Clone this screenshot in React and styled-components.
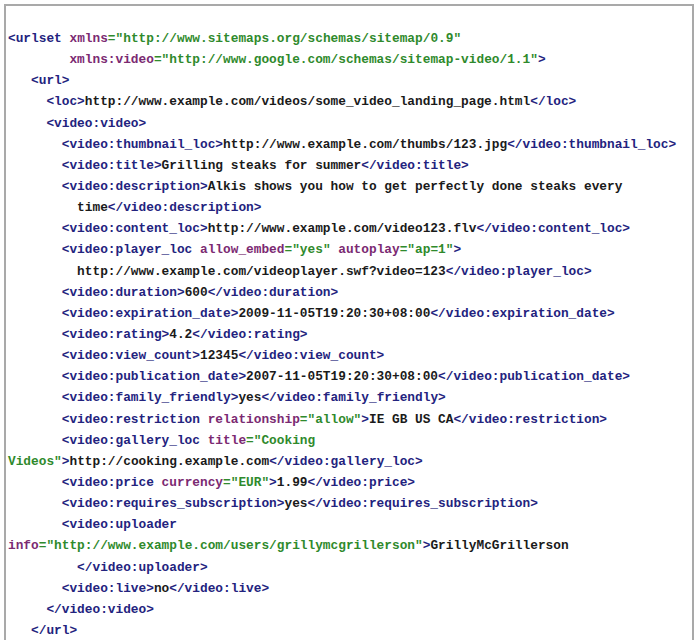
import React from 'react';
import styled, { createGlobalStyle } from 'styled-components';

const GlobalStyle = createGlobalStyle`
  html, body {
    margin: 0;
    padding: 0;
    background: #ffffff;
    overflow: hidden;
  }
`;

// each line: [indent, tokens], token: [kind, text]
const lines = [
  [0, [['t', '<urlset'], ['x', ' '], ['a', 'xmlns'], ['v', '="http://www.sitemaps.org/schemas/sitemap/0.9"']]],
  [8, [['a', 'xmlns:video'], ['v', '="http://www.google.com/schemas/sitemap-video/1.1"'], ['t', '>']]],
  [3, [['t', '<url>']]],
  [5, [['t', '<loc>'], ['x', 'http://www.example.com/videos/some_video_landing_page.html'], ['t', '</loc>']]],
  [5, [['t', '<video:video>']]],
  [7, [['t', '<video:thumbnail_loc>'], ['x', 'http://www.example.com/thumbs/123.jpg'], ['t', '</video:thumbnail_loc>']]],
  [7, [['t', '<video:title>'], ['x', 'Grilling steaks for summer'], ['t', '</video:title>']]],
  [7, [['t', '<video:description>'], ['x', 'Alkis shows you how to get perfectly done steaks every']]],
  [9, [['x', 'time'], ['t', '</video:description>']]],
  [7, [['t', '<video:content_loc>'], ['x', 'http://www.example.com/video123.flv'], ['t', '</video:content_loc>']]],
  [7, [['t', '<video:player_loc'], ['x', ' '], ['a', 'allow_embed'], ['v', '="yes"'], ['x', ' '], ['a', 'autoplay'], ['v', '="ap=1"'], ['t', '>']]],
  [9, [['x', 'http://www.example.com/videoplayer.swf?video=123'], ['t', '</video:player_loc>']]],
  [7, [['t', '<video:duration>'], ['x', '600'], ['t', '</video:duration>']]],
  [7, [['t', '<video:expiration_date>'], ['x', '2009-11-05T19:20:30+08:00'], ['t', '</video:expiration_date>']]],
  [7, [['t', '<video:rating>'], ['x', '4.2'], ['t', '</video:rating>']]],
  [7, [['t', '<video:view_count>'], ['x', '12345'], ['t', '</video:view_count>']]],
  [7, [['t', '<video:publication_date>'], ['x', '2007-11-05T19:20:30+08:00'], ['t', '</video:publication_date>']]],
  [7, [['t', '<video:family_friendly>'], ['x', 'yes'], ['t', '</video:family_friendly>']]],
  [7, [['t', '<video:restriction'], ['x', ' '], ['a', 'relationship'], ['v', '="allow"'], ['t', '>'], ['x', 'IE GB US CA'], ['t', '</video:restriction>']]],
  [7, [['t', '<video:gallery_loc'], ['x', ' '], ['a', 'title'], ['v', '="Cooking']]],
  [0, [['v', 'Videos"'], ['t', '>'], ['x', 'http://cooking.example.com'], ['t', '</video:gallery_loc>']]],
  [7, [['t', '<video:price'], ['x', ' '], ['a', 'currency'], ['v', '="EUR"'], ['t', '>'], ['x', '1.99'], ['t', '</video:price>']]],
  [7, [['t', '<video:requires_subscription>'], ['x', 'yes'], ['t', '</video:requires_subscription>']]],
  [7, [['t', '<video:uploader']]],
  [0, [['a', 'info'], ['v', '="http://www.example.com/users/grillymcgrillerson"'], ['t', '>'], ['x', 'GrillyMcGrillerson']]],
  [9, [['t', '</video:uploader>']]],
  [7, [['t', '<video:live>'], ['x', 'no'], ['t', '</video:live>']]],
  [5, [['t', '</video:video>']]],
  [3, [['t', '</url>']]],
];

const colors = {
  t: '#23237e',
  a: '#7b2a72',
  v: '#2f8a2c',
  x: '#1a1a1a',
};

const Frame = styled.div`
  margin: 4px 0 0 4px;
  width: 690px;
  height: 660px;
  border: 2px solid #a9a9a9;
  border-bottom: none;
  box-sizing: border-box;
  padding: 22px 0 0 2px;
`;

const Code = styled.pre`
  margin: 0;
  font-family: "Liberation Mono", "Courier New", monospace;
  font-size: 12.8px;
  font-weight: bold;
  line-height: 21.14px;
  white-space: pre;
  color: #1a1a1a;
`;

const Line = styled.div`
  padding-left: ${(p) => p.$indent * 7.68}px;
`;

const Tok = styled.span`
  color: ${(p) => colors[p.$kind]};
`;

const App = () => (
  <>
    <GlobalStyle />
    <Frame>
      <Code>
        {lines.map(([indent, tokens], i) => (
          <Line key={i} $indent={indent}>
            {tokens.map(([kind, text], j) => (
              <Tok key={j} $kind={kind}>{text}</Tok>
            ))}
          </Line>
        ))}
      </Code>
    </Frame>
  </>
);

export default App;
